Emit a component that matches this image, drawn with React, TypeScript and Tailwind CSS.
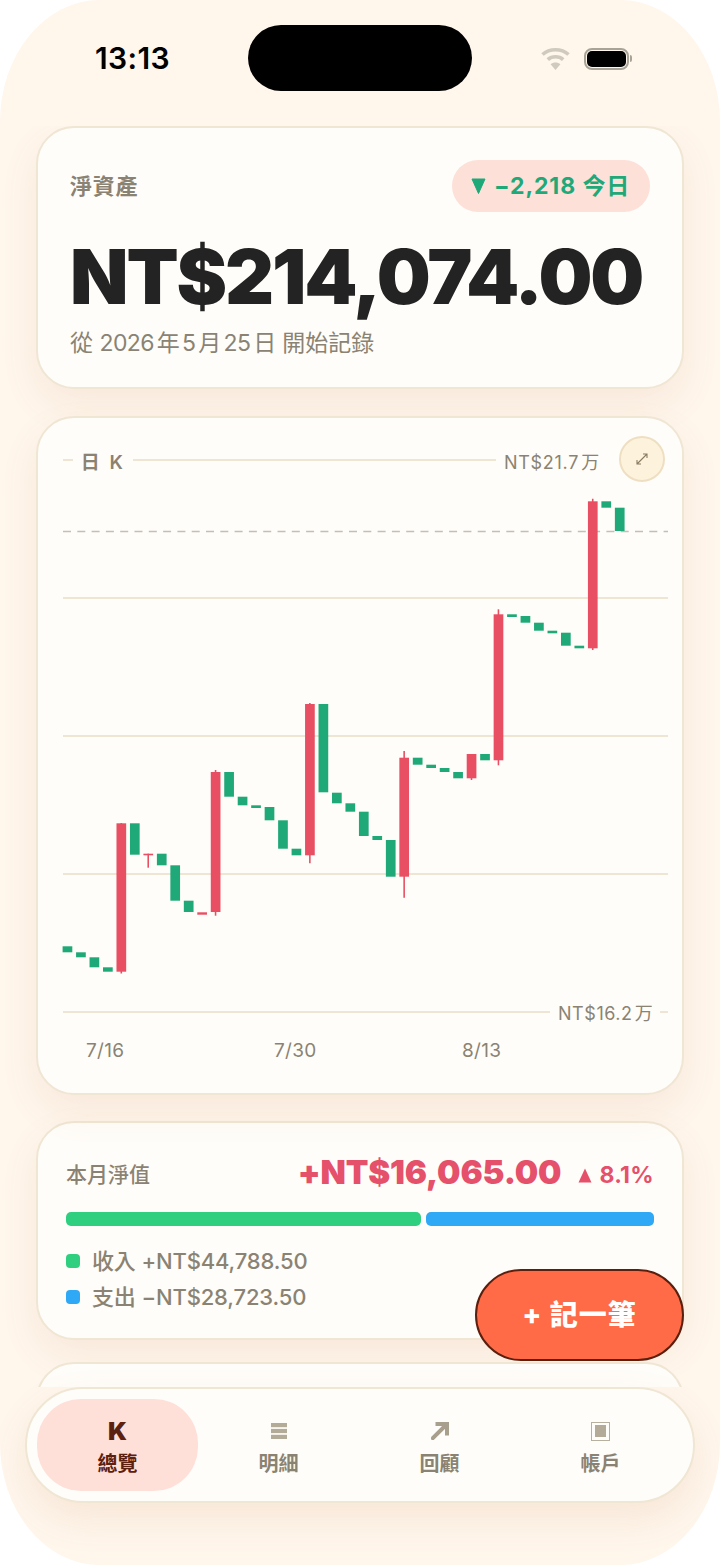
const GREEN = "#1fa878";
const RED = "#e94f63";
// top, bottom, red?, wickTop, wickBottom
const candles: [number, number, number, number?, number?][] = [
  [946.3, 952.3, 0], [952.3, 957.3, 0], [957.3, 967.3, 0], [967.3, 971.7, 0],
  [823.3, 971.7, 1, 823, 973.5], [823.3, 854.7, 0], [853.7, 855.3, 1, 853.7, 867.7], [853.7, 865.3, 0],
  [865.3, 900.7, 0], [900.7, 912, 0], [912.3, 914.7, 1], [772, 912, 1, 770, 915.7],
  [772, 796.7, 0], [796.7, 805.3, 0], [805.3, 808, 0], [807, 820.3, 0],
  [820.3, 848.7, 0], [848.7, 855.3, 0], [704, 855.3, 1, 703, 863.3], [704, 792.3, 0],
  [792.7, 803.3, 0], [803.3, 811.7, 0], [811.7, 836, 0], [836, 840, 0],
  [840, 876.7, 0], [757.7, 876.7, 1, 751, 897.7], [757.7, 764.7, 0], [764.7, 768, 0],
  [768, 772, 0], [772, 778.3, 0], [754, 778.3, 1, 754, 780], [754, 760.3, 0],
  [614.3, 760.3, 1, 609.3, 765.3], [614.3, 617, 0], [616, 622.7, 0], [622.7, 630.7, 0],
  [630.7, 633.3, 0], [632.7, 645.7, 0], [645.7, 648.3, 0], [501.3, 648.3, 1, 498.7, 650],
  [501.3, 507.7, 0], [507.7, 531, 0],
];

const font = "font-['Inter','Noto_Sans_CJK_TC',sans-serif]";

function Chart() {
  return (
    <svg viewBox="38 418 644 675" width="644" height="675" className="block">
      {[460, 598, 736, 874, 1012].map((y) => (
        <line key={y} x1="63" x2="668" y1={y} y2={y} stroke="#eee5d3" strokeWidth="2" />
      ))}
      <line x1="63" x2="668" y1="531.5" y2="531.5" stroke="#c2bfb6" strokeWidth="1.5" strokeDasharray="8 6.3" />
      {candles.map(([top, bottom, red, wt, wb], i) => {
        const x = 62.6 + i * 13.47;
        const c = red ? RED : GREEN;
        return (
          <g key={i}>
            {wt !== undefined && (
              <line x1={x + 4.8} x2={x + 4.8} y1={wt} y2={wb} stroke={c} strokeWidth="1.6" />
            )}
            <rect x={x} y={top} width="9.7" height={bottom - top} fill={c} />
          </g>
        );
      })}
    </svg>
  );
}

function Wifi() {
  return (
    <svg width="29" height="23" viewBox="0 0 29 23" fill="none" stroke="#cfcabd" strokeWidth="3.6">
      <path d="M1.5 7.5C8.5 1.2 20.5 1.2 27.5 7.5" />
      <path d="M6.8 12.6C11 8.8 18 8.8 22.2 12.6" />
      <path d="M14.5 23 9.6 17.3C12.2 14.9 16.8 14.9 19.4 17.3Z" fill="#cfcabd" stroke="none" />
    </svg>
  );
}

function Battery() {
  return (
    <div className="flex items-center gap-[1px]">
      <div className="w-[45px] h-[22px] rounded-[8px] border-[2px] border-[#a8a397] p-[1px]">
        <div className="h-full w-full rounded-[5px] bg-black" />
      </div>
      <div className="w-[2px] h-[7px] rounded-r-[2px] bg-[#a8a397]" />
    </div>
  );
}

function NavItem({ label, icon, active }: { label: string; icon: React.ReactNode; active?: boolean }) {
  return (
    <div
      className={`w-[161px] h-[92px] flex flex-col items-center rounded-[44px] pt-[22px] ${
        active ? "bg-[#fee0d9] text-[#5c2010]" : "text-[#8a8373]"
      }`}
    >
      <div className="h-[20px] flex items-center justify-center">{icon}</div>
      <div className="mt-[11px] text-[20px] leading-[24px] font-bold">{label}</div>
    </div>
  );
}

export default function App() {
  return (
    <div className={`w-[720px] h-[1565px] bg-white overflow-hidden ${font} [text-autospace:normal]`}>
      <div className="relative h-full rounded-[100px/122px] bg-[#fff6ec] overflow-hidden flex flex-col">
        {/* status bar */}
        <div className="h-[126px] shrink-0 flex items-start">
          <div className="w-[248px] pl-[95px] pt-[41px] text-[30px] leading-[35px] font-semibold text-black tracking-[0.4px]">
            13:13
          </div>
          <div className="mt-[25px] w-[224px] h-[66px] rounded-[33px] bg-black" />
          <div className="flex-1 flex items-center pl-[69px] pt-[47px] gap-[14px]">
            <Wifi />
            <Battery />
          </div>
        </div>

        {/* content */}
        <div className="flex-1 min-h-0 overflow-hidden px-[36px] flex flex-col">
          {/* net worth */}
          <div className="shrink-0 h-[263px] rounded-[38px] border-2 border-[#f0e6d4] bg-[#fffdf9] px-[32px] pt-[32px] shadow-[0_16px_36px_rgba(190,130,80,0.11)]">
            <div className="flex items-center justify-between h-[52px]">
              <div className="text-[22px] font-bold text-[#8a8272] tracking-[0.8px]">淨資產</div>
              <div className="h-[52px] w-[198px] rounded-full bg-[#fde0d8] flex items-center pl-[19px] gap-[8px] text-[23px] font-bold text-[#1fa878]">
                <svg width="15" height="16" viewBox="0 0 15 16" fill="#1fa878">
                  <path d="M1 1h13L7.5 15.5Z" stroke="#1fa878" strokeWidth="1" strokeLinejoin="round" />
                </svg>
                <span className="tracking-[0.9px] whitespace-nowrap">−2,218 今日</span>
              </div>
            </div>
            <div className="mt-[24px] h-[80px] leading-[80px] text-[76px] font-black text-[#232323] tracking-[-2.1px] whitespace-nowrap">
              NT$214,074.00
            </div>
            <div className="mt-[13px] text-[23px] leading-[28px] text-[#8a8373]">
              從 <span className="tracking-[-0.6px]">2026年5月25日</span> 開始記錄
            </div>
          </div>

          {/* chart */}
          <div className="relative shrink-0 mt-[27px] h-[679px] rounded-[38px] border-2 border-[#f0e6d4] bg-[#fffdf9] overflow-hidden shadow-[0_16px_36px_rgba(190,130,80,0.11)]">
            <Chart />
            <div className="absolute left-[35px] top-[30px] w-[60px] h-[30px] bg-[#fffdf9] text-center text-[19px] leading-[30px] font-semibold tracking-[2.5px] text-[#8a8272]">
              日 K
            </div>
            <div className="absolute left-[458px] top-[30px] w-[186px] h-[30px] bg-[#fffdf9] pl-[8px] text-[18px] leading-[30px] tracking-[0.7px] text-[#8a8373]">
              NT$21.7万
            </div>
            <div className="absolute left-[581px] top-[18px] w-[46px] h-[46px] rounded-full bg-[#fdf3dd] border-2 border-[#efdfc2] flex items-center justify-center">
              <svg width="14" height="14" viewBox="0 0 14 14" fill="none" stroke="#8a7a62" strokeWidth="1.1">
                <path d="M2 12 12 2M8 2h4v4M2 8v4h4" />
              </svg>
            </div>
            <div className="absolute left-[512px] top-[581px] w-[110px] h-[30px] bg-[#fffdf9] pl-[8px] text-[18px] leading-[30px] tracking-[0.55px] text-[#8a8373]">
              NT$16.2万
            </div>
            {[
              ["7/16", 48],
              ["7/30", 236],
              ["8/13", 424],
            ].map(([t, l]) => (
              <div
                key={t as string}
                style={{ left: l as number }}
                className="absolute top-[619px] text-[19px] leading-[28px] tracking-[0.3px] text-[#8a8373]"
              >
                {t}
              </div>
            ))}
          </div>

          {/* month */}
          <div className="shrink-0 mt-[26px] h-[219px] rounded-[38px] border-2 border-[#f0e6d4] bg-[#fffdf9] px-[28px] pt-[30px] shadow-[0_16px_36px_rgba(190,130,80,0.11)]">
            <div className="flex items-center h-[40px]">
              <div className="text-[21px] font-medium text-[#8a8272] mt-[4px]">本月淨值</div>
              <div className="ml-auto text-[33px] font-black text-[#e5506a] tracking-[-0.15px]">+NT$16,065.00</div>
              <div className="ml-[17px] flex items-center gap-[7px] text-[23px] font-bold text-[#e5506a] mt-[5px]">
                <svg width="14" height="15" viewBox="0 0 14 15" fill="#e5506a">
                  <path d="M7 .5 13.5 14.5H.5Z" />
                </svg>
                <span className="tracking-[0.3px]">8.1%</span>
              </div>
            </div>
            <div className="mt-[19px] flex gap-[5px] h-[14px]">
              <div className="w-[355px] rounded-[5px] bg-[#2fcf80]" />
              <div className="flex-1 rounded-[5px] bg-[#2fa8f5]" />
            </div>
            <div className="mt-[17px] flex items-center h-[36px] gap-[12px] text-[22px] font-medium text-[#8a8373] tracking-[-0.15px]">
              <span className="w-[14px] h-[14px] rounded-[4px] bg-[#2fcf80]" />
              <span>收入 +NT$44,788.50</span>
            </div>
            <div className="flex items-center h-[36px] gap-[12px] text-[22px] font-medium text-[#8a8373] tracking-[-0.15px]">
              <span className="w-[14px] h-[14px] rounded-[4px] bg-[#2fa8f5]" />
              <span>支出 −NT$28,723.50</span>
            </div>
          </div>

          {/* next card, cut off by the tab bar */}
          <div className="shrink-0 mt-[22px] h-[200px] rounded-[38px] border-2 border-[#f0e6d4] bg-[#fffdf9]" />
        </div>

        {/* tab bar */}
        <div className="shrink-0 mx-[25px] mb-[62px] h-[116px] rounded-[58px] border-2 border-[#f0e6d4] bg-[#fffdf9] flex items-center pl-[10px] shadow-[0_16px_36px_rgba(190,130,80,0.13)]">
          <NavItem active label="總覽" icon={<span className="text-[25px] leading-[20px] font-black">K</span>} />
          <NavItem
            label="明細"
            icon={
              <svg width="16" height="16" viewBox="0 0 16 16" fill="#b3aa98">
                <rect y="0" width="16" height="4.2" />
                <rect y="5.9" width="16" height="4.2" />
                <rect y="11.8" width="16" height="4.2" />
              </svg>
            }
          />
          <NavItem
            label="回顧"
            icon={
              <svg width="18" height="18" viewBox="0 0 18 18" fill="none" stroke="#a89f8d" strokeWidth="4">
                <path d="M1.8 16.2 14 4" strokeLinecap="round" />
                <path d="M4.5 2h11.5v11.5" />
              </svg>
            }
          />
          <NavItem
            label="帳戶"
            icon={
              <div className="w-[19px] h-[19px] border-[1.5px] border-[#b8b09f] flex items-center justify-center">
                <div className="w-[11px] h-[12px] bg-[#b3aa98]" />
              </div>
            }
          />
        </div>

        {/* add button */}
        <div className="absolute left-[475px] top-[1269px] w-[209px] h-[92px] rounded-full bg-[#ff6b47] border-2 border-[#5b1f0e] flex items-center justify-center text-[28px] font-extrabold text-white tracking-[1px]">
          + 記一筆
        </div>
      </div>
    </div>
  );
}
